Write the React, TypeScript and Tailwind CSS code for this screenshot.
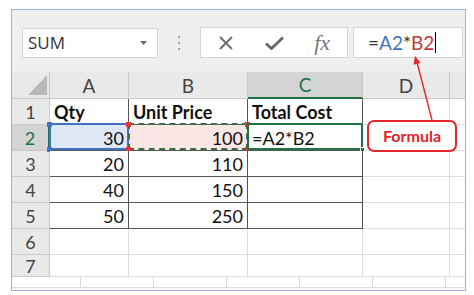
import React from 'react';

type Row = { n: number; a: string; b: string; c: string };

const rows: Row[] = [
  { n: 1, a: 'Qty', b: 'Unit Price', c: 'Total Cost' },
  { n: 2, a: '30', b: '100', c: '=A2*B2' },
  { n: 3, a: '20', b: '110', c: '' },
  { n: 4, a: '40', b: '150', c: '' },
  { n: 5, a: '50', b: '250', c: '' },
  { n: 6, a: '', b: '', c: '' },
  { n: 7, a: '', b: '', c: '' },
];

function Toolbar() {
  return (
    <div className="h-[62px] flex items-start pt-[18px] pl-[10px]">
      {/* Name box */}
      <div className="w-[136px] h-[30px] bg-white border border-[#d4d4d4] flex items-center justify-between pl-[5px] pr-[10px]">
        <span className="font-['Open_Sans',sans-serif] text-[17px] text-[#333]">SUM</span>
        <svg width="7" height="4" viewBox="0 0 7 4">
          <path d="M0 0h7L3.5 4z" fill="#6b6b6b" />
        </svg>
      </div>

      {/* separator dots */}
      <div className="w-[42px] h-[30px] flex flex-col items-center justify-center gap-[4px]">
        <div className="w-[2px] h-[2px] bg-[#a0a0a0]" />
        <div className="w-[2px] h-[2px] bg-[#a0a0a0]" />
        <div className="w-[2px] h-[2px] bg-[#a0a0a0]" />
      </div>

      {/* cancel / enter / fx */}
      <div className="w-[148px] h-[31px] -mt-px bg-white border border-[#d4d4d4] flex items-center">
        <div className="w-[50px] flex justify-center">
          <svg width="16" height="16" viewBox="0 0 16 16">
            <path d="M2 2L14 14M14 2L2 14" stroke="#6a6a6a" strokeWidth="1.8" />
          </svg>
        </div>
        <div className="w-[47px] flex justify-center">
          <svg width="19" height="14" viewBox="0 0 19 14">
            <path d="M1 7.5L6.5 12.5L18 1.5" stroke="#6a6a6a" strokeWidth="3" fill="none" strokeLinejoin="round" />
          </svg>
        </div>
        <div className="w-[50px] flex justify-center">
          <span className="font-['Liberation_Serif',serif] italic text-[22px] text-[#777] leading-none">fx</span>
        </div>
      </div>

      {/* formula input */}
      <div className="ml-[5px] w-[110px] h-[31px] -mt-px bg-white border border-[#d4d4d4] flex items-center pl-[14px]">
        <span className="font-['Lato',sans-serif] text-[19px] leading-none text-[#333]">=</span>
        <span className="font-['Lato',sans-serif] text-[19px] leading-none text-[#3f72c4]">A2</span>
        <span className="font-['Lato',sans-serif] text-[19px] leading-none text-[#333]">*</span>
        <span className="font-['Lato',sans-serif] text-[19px] leading-none text-[#c0393b]">B2</span>
        <span className="ml-[1px] w-px h-[21px] bg-black" />
      </div>
    </div>
  );
}

function ColHeader({ label, active }: { label: string; active?: boolean }) {
  if (active) {
    return (
      <div className="bg-[#d4d4d4] border-r border-b-2 border-r-[#c4c4c4] border-b-[#217346] flex items-center justify-center text-[19px] text-[#217346]">
        {label}
      </div>
    );
  }
  return (
    <div className="bg-[#e9e9e9] border-r border-b border-[#c9c9c9] flex items-center justify-center text-[19px] text-[#444]">
      {label}
    </div>
  );
}

function RowHeader({ n }: { n: number }) {
  if (n === 2) {
    return (
      <div className="bg-[#d4d4d4] border-r-2 border-b border-r-[#217346] border-b-[#c9c9c9] flex items-center justify-center text-[18px] text-[#217346]">
        {n}
      </div>
    );
  }
  return (
    <div className="bg-[#e9e9e9] border-r border-b border-[#c9c9c9] flex items-center justify-center text-[18px] text-[#444]">
      {n}
    </div>
  );
}

function DataRow({ row }: { row: Row }) {
  const bold = row.n === 1;
  const framed = row.n <= 5;
  const txt = bold ? 'font-bold' : '';
  const edge = framed ? 'border-r border-b border-r-[#555] border-b-[#555]' : 'border-r border-b border-[#dcdcdc]';
  return (
    <>
      <RowHeader n={row.n} />
      <div className={`relative bg-white px-[4px] flex items-center ${bold ? 'justify-start' : 'justify-end'} ${edge} ${txt}`}>
        {row.n === 2 && (
          <>
            <div className="absolute inset-0 bg-[#dde7f5]" />
            <div className="absolute -top-[2px] -left-px right-[-1px] bottom-0 border-2 border-[#3f72c4]" />
            <div className="absolute -top-[3px] -left-[3px] w-[5px] h-[5px] bg-[#3f72c4]" />
            <div className="absolute -bottom-[2px] -left-[3px] w-[5px] h-[5px] bg-[#3f72c4]" />
          </>
        )}
        <span className="relative">{row.a}</span>
      </div>
      <div className={`relative bg-white px-[4px] flex items-center ${bold ? 'justify-start' : 'justify-end'} ${edge} ${txt}`}>
        {row.n === 2 && (
          <>
            <div className="absolute inset-0 bg-[#fbe6e6]" />
            <div className="absolute -top-[2px] -left-px right-[-1px] bottom-0 border-2 border-dashed border-[#3d6b45]" />
            <div className="absolute -top-[3px] -left-[3px] w-[5px] h-[5px] bg-[#e0363b]" />
            <div className="absolute -bottom-[2px] -left-[3px] w-[5px] h-[5px] bg-[#e0363b]" />
            <div className="absolute -top-[3px] -right-[3px] w-[5px] h-[5px] bg-[#e0363b]" />
            <div className="absolute -bottom-[2px] -right-[3px] w-[5px] h-[5px] bg-[#e0363b]" />
          </>
        )}
        <span className="relative">{row.b}</span>
      </div>
      <div className={`relative bg-white px-[4px] flex items-center justify-start ${edge} ${txt}`}>
        {row.n === 2 && (
          <>
            <div className="absolute -top-[2px] -left-px right-[-1px] bottom-0 border-2 border-[#217346]" />
            <div className="absolute -bottom-[2px] -right-[3px] w-[5px] h-[5px] bg-[#217346] border border-white" />
          </>
        )}
        <span className="relative">{row.c}</span>
      </div>
      <div className="bg-white border-r border-b border-[#dcdcdc]" />
      <div className="bg-white border-b border-[#dcdcdc]" />
    </>
  );
}

function Sheet() {
  return (
    <div className="grid grid-cols-[38px_79px_119px_115px_87px_15px] grid-rows-[27px_26px_26px_26px_26px_26px_26px_22px] font-['Lato',sans-serif] text-[18px] text-[#111] leading-none overflow-hidden">
      <div className="relative bg-[#e9e9e9] border-r border-b border-[#c9c9c9]">
        <svg className="absolute right-[2px] bottom-[3px]" width="19" height="20" viewBox="0 0 19 20">
          <path d="M19 0V20H0z" fill="#b9b9b9" />
        </svg>
      </div>
      <ColHeader label="A" />
      <ColHeader label="B" />
      <ColHeader label="C" active />
      <ColHeader label="D" />
      <div className="bg-[#e9e9e9] border-b border-[#c9c9c9]" />
      {rows.map((r) => (
        <DataRow key={r.n} row={r} />
      ))}
    </div>
  );
}

export default function App() {
  return (
    <div className="relative w-[474px] h-[295px] bg-white pt-[9px] pl-[11px]">
      <div className="w-[455px] h-[282px] border border-[#9fb0dc] bg-[#efefef] flex flex-col overflow-hidden">
        <Toolbar />
        <Sheet />
        {/* strip under the grid */}
        <div className="flex-1 bg-white flex flex-col">
          <div className="h-[10px] pl-[68px] flex gap-[72px]">
            <div className="w-px h-full bg-[#d6d6d6]" />
            <div className="w-px h-full bg-[#d6d6d6]" />
            <div className="w-px h-full bg-[#d6d6d6]" />
            <div className="w-px h-full bg-[#d6d6d6]" />
            <div className="w-px h-full bg-[#d6d6d6]" />
            <div className="w-px h-full bg-[#d6d6d6]" />
          </div>
          <div className="h-px bg-[#dcdcdc]" />
        </div>
      </div>

      {/* callout */}
      <div className="absolute left-[367px] top-[120px] w-[90px] h-[32px] rounded-[7px] border-2 border-[#e5282e] bg-white flex items-center justify-center">
        <span className="font-['Lato',sans-serif] font-bold text-[16px] text-[#e0252b]">Formula</span>
      </div>
      <svg className="absolute left-0 top-0 pointer-events-none" width="474" height="295">
        <line x1="432" y1="120" x2="417.3" y2="63.5" stroke="#e5282e" strokeWidth="1.4" />
        <polygon points="415,56 420.6,63 413.5,64.8" fill="#e5282e" />
      </svg>
    </div>
  );
}
